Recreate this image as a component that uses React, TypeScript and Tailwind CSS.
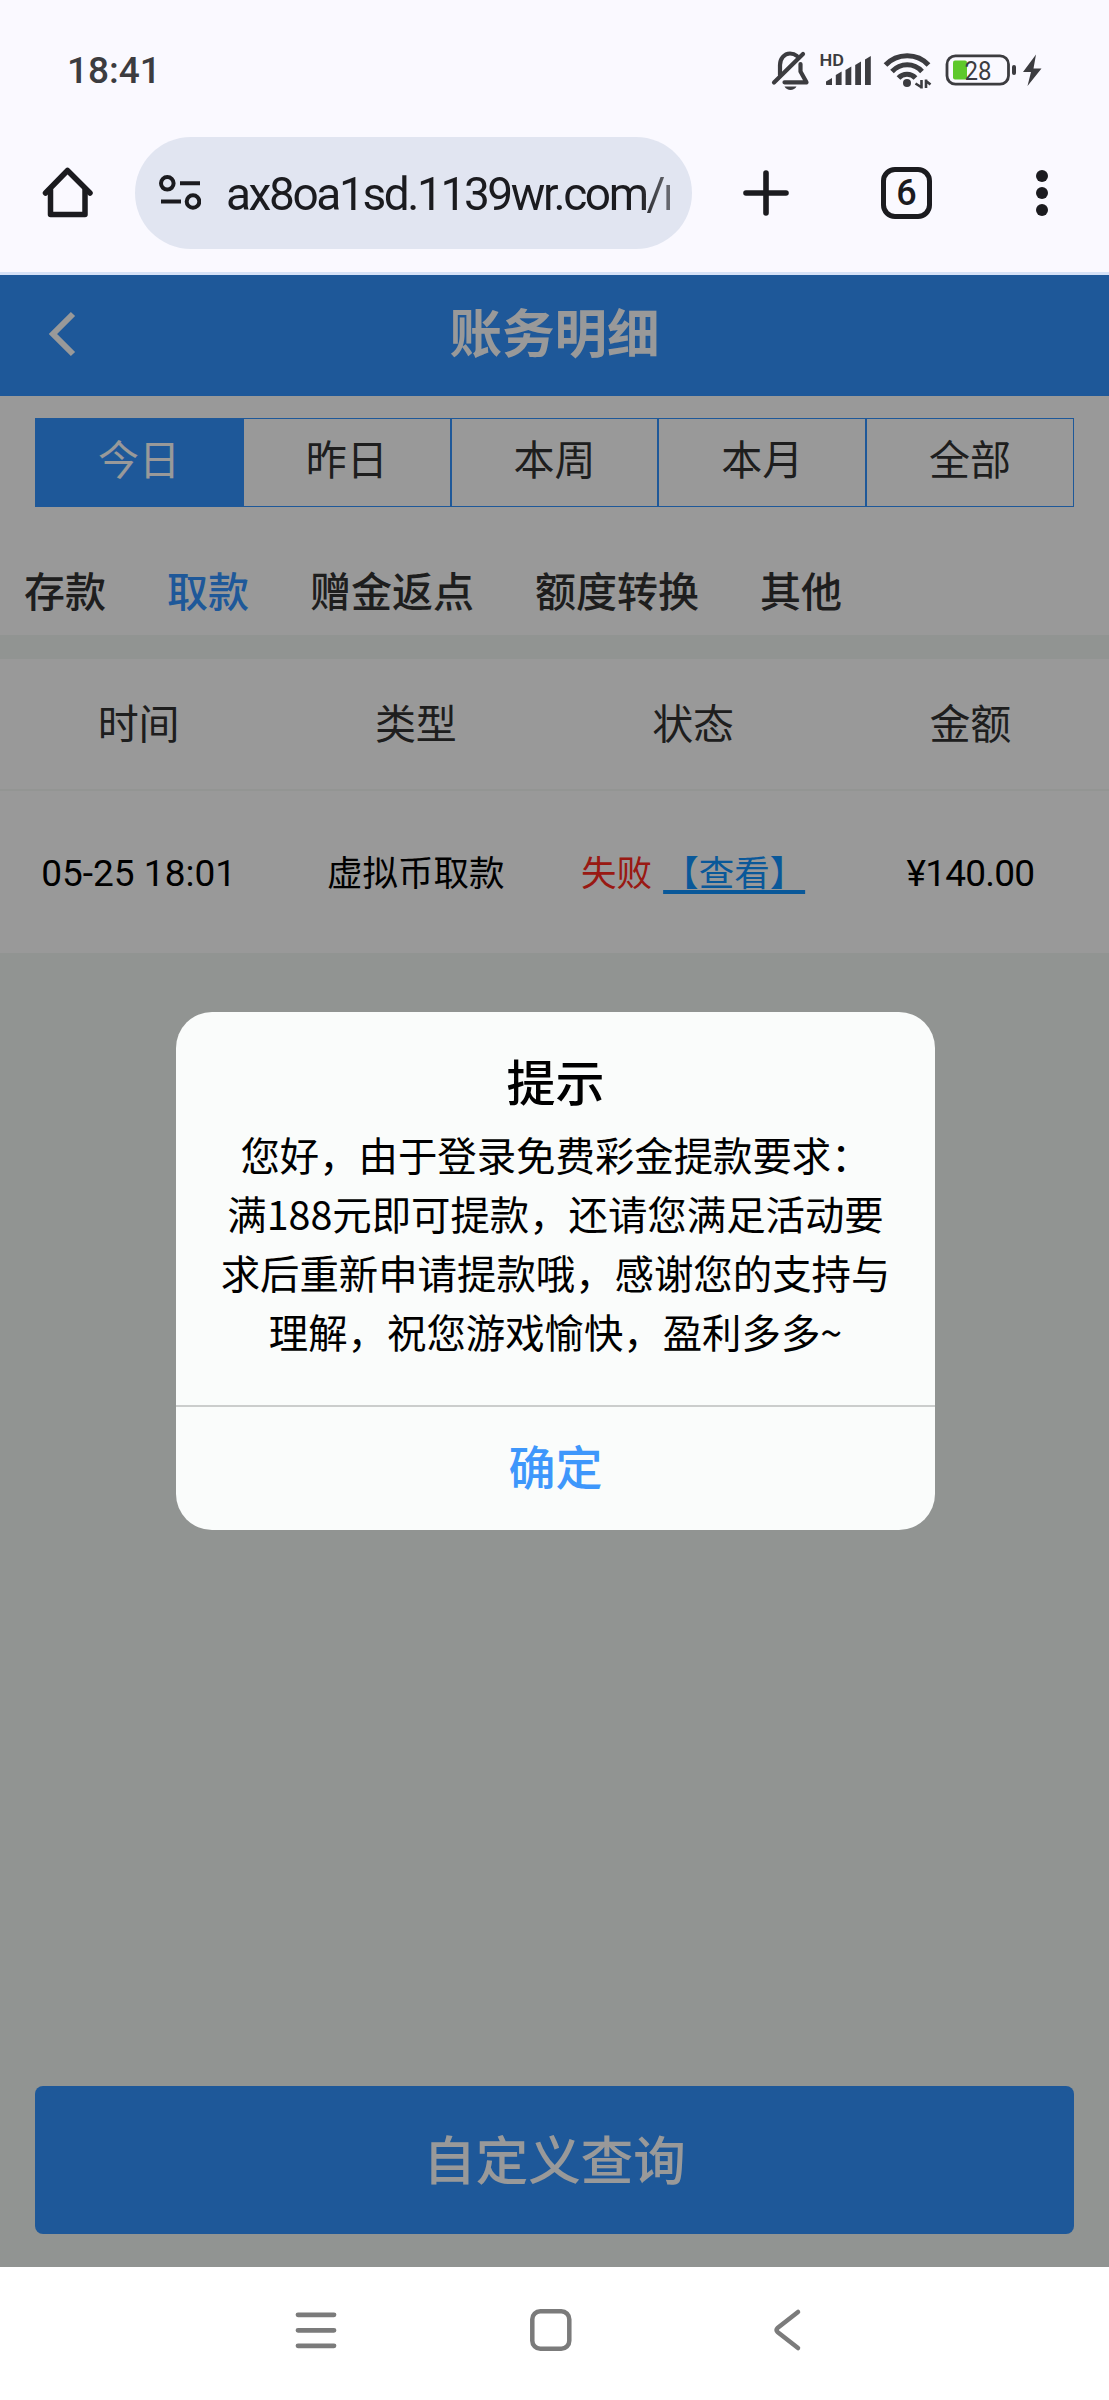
import { clsx } from 'clsx';

interface RecordRow {
  time: string;
  type: string;
  status: string;
  amount: string;
}

const ranges = ['今日', '昨日', '本周', '本月', '全部'];
const categories = ['存款', '取款', '赠金返点', '额度转换', '其他'];
const columns = ['时间', '类型', '状态', '金额'];
const records: RecordRow[] = [
  { time: '05-25 18:01', type: '虚拟币取款', status: '失败', amount: '¥140.00' },
];
const message = [
  '您好，由于登录免费彩金提款要求：',
  '满188元即可提款，还请您满足活动要',
  '求后重新申请提款哦，感谢您的支持与',
  '理解，祝您游戏愉快，盈利多多~',
];

const StatusBar = () => (
  <div className="flex h-[137px] items-start justify-between pl-[67px] pr-[66px] text-[#3c3c40]">
    <span className="mt-[49px] text-[37px] leading-[44px] font-medium">18:41</span>
    <svg className="mt-[46px] h-12 w-[272px]" viewBox="771 46 272 48" fill="none">
      {/* muted bell */}
      <g stroke="currentColor" strokeWidth="4.2" strokeLinecap="round" strokeLinejoin="round">
        <path d="M780 75V65c0-6 4-11.500 10-11.500 3 0 5 .8 7 2.500" />
        <path d="M800.500 64v7.500l6 10.800h-22" />
        <path d="M774 82.500 803 54" />
      </g>
      <path d="M784.500 86.500h12c-1.200 2.300-3.500 3.500-6 3.500s-4.800-1.200-6-3.500Z" fill="currentColor" />
      {/* signal */}
      <text x="819.500" y="66" fontSize="16" fontWeight="600" fill="currentColor" textLength="24.500" lengthAdjust="spacingAndGlyphs">HD</text>
      <g fill="currentColor">
        <path d="M826 84.500v-3l6-3.500v7h-5.500Z" />
        <path d="M835.800 85V75l5.800-3.500V85Z" />
        <path d="M845.500 85V70l5.800-3.500V85Z" />
        <path d="M855.200 85V65l5.800-3.500V85Z" />
        <path d="M865 85V59.500l5.800-3.500V85Z" />
      </g>
      {/* wifi */}
      <g stroke="currentColor" strokeWidth="5">
        <path d="M885.500 65c11.500-12.500 32-12.500 43 0" />
        <path d="M892 71.500c8.500-9 22-9 30 0" />
        <path d="M898.500 78c4.500-5 12.500-5 17 0" />
      </g>
      <circle cx="907" cy="83" r="4" fill="currentColor" />
      <g stroke="currentColor" strokeWidth="2.600">
        <path d="M921.500 80v8.500M915.500 83.500l5.500 3.500M926 88v-8.500M926 81l4.500 3.500" />
      </g>
      {/* battery */}
      <rect x="953" y="60.500" width="14" height="19" rx="2" fill="#5ec82b" />
      <rect x="947" y="55.800" width="61.500" height="28.400" rx="8.500" stroke="currentColor" strokeWidth="2.800" />
      <rect x="1012" y="65" width="4" height="10" rx="2" fill="currentColor" />
      <text x="964.500" y="79.500" fontSize="25" fill="currentColor" textLength="27" lengthAdjust="spacingAndGlyphs">28</text>
      <path d="M1036 54.500 1023 72h8l-3.500 14 14-17.500h-8Z" fill="currentColor" />
    </svg>
  </div>
);

const BrowserBar = () => (
  <div className="flex h-28 items-center text-[#1b1b1f]">
    <svg className="ml-[41px] h-[54px] w-[54px] shrink-0" viewBox="0 0 54 54" fill="none" stroke="currentColor" strokeWidth="5.500" strokeLinecap="round" strokeLinejoin="round">
      <path d="M4.500 27 26.500 4.500 49 27" />
      <path d="M9.500 24v24.500h34.500V24" />
    </svg>
    <div className="ml-10 flex h-28 w-[557px] shrink-0 items-center rounded-full bg-[#e1e5f1] pl-6">
      <svg className="h-9 w-[42px] shrink-0" viewBox="0 0 42 36" fill="none" stroke="currentColor" strokeWidth="4">
        <circle cx="8.300" cy="8.300" r="6.300" />
        <circle cx="34" cy="26.500" r="6.300" />
        <path d="M21 8.300h20M2 26.500h20" />
      </svg>
      <div className="ml-[25px] h-16 w-[444px] overflow-hidden text-[46px] leading-[66px] whitespace-nowrap [mask-image:linear-gradient(to_right,black_93%,rgba(0,0,0,.6)_100%)]">
        <span className="tracking-[-2.400px]">ax8oa1sd.1139wr.com/m</span>
      </div>
    </div>
    <svg className="ml-[50px] h-12 w-12 shrink-0" viewBox="0 0 48 48" fill="none" stroke="currentColor" strokeWidth="5.600" strokeLinecap="round">
      <path d="M24 4v40M4 24h40" />
    </svg>
    <div className="ml-[91px] flex h-[52px] w-[51px] shrink-0 items-center justify-center rounded-[14px] border-[5.500px] border-current text-[36px] leading-none font-medium">
      6
    </div>
    <div className="ml-[104px] flex flex-col gap-[5.500px]">
      <i className="size-[11.500px] rounded-full bg-current" />
      <i className="size-[11.500px] rounded-full bg-current" />
      <i className="size-[11.500px] rounded-full bg-current" />
    </div>
  </div>
);

const RangeTabs = () => (
  <div className="mx-[35px] mt-[22px] flex h-[89px] border border-[#3293ff]">
    {ranges.map((label, i) => (
      <button
        key={label}
        className={clsx(
          'flex-1 pb-[2px] text-[41px] leading-none',
          i > 0 && 'border-l-2 border-[#3293ff]',
          i === 0 ? 'bg-[#3293ff] text-white' : 'text-[#333]',
        )}
      >
        {label}
      </button>
    ))}
  </div>
);

const CategoryTabs = () => (
  <div className="flex h-32 gap-[61px] pl-6 text-[41px] leading-[173px] font-medium text-[#333]">
    {categories.map((label) => (
      <span key={label} className={label === '取款' ? 'text-[#3293ff]' : undefined}>
        {label}
      </span>
    ))}
  </div>
);

const RecordTable = () => (
  <div className="mt-6 bg-white text-center">
    <div className="grid h-[132px] grid-cols-4 border-b-2 border-[#f5f8f6] text-[41px] leading-[133px] text-[#333]">
      {columns.map((name) => (
        <span key={name}>{name}</span>
      ))}
    </div>
    {records.map((row) => (
      <div key={row.time} className="grid h-[162px] grid-cols-4 text-[35.500px] leading-[166px] whitespace-nowrap text-black">
        <span className="text-[37px]">{row.time}</span>
        <span>{row.type}</span>
        <span>
          <span className="mr-[11px] text-[#ff2a20]">{row.status}</span>
          <a className="text-[#0f93ff] underline decoration-[4px] underline-offset-[4px] [text-decoration-skip-ink:none]">【查看】</a>
        </span>
        <span className="text-[37px] tracking-[-0.8px]">{row.amount}</span>
      </div>
    ))}
  </div>
);

const TipDialog = () => (
  <div className="absolute top-[737px] left-[176px] flex h-[518px] w-[759px] flex-col rounded-[36px] bg-[#fafcfb] text-center text-black">
    <h2 className="mt-[37px] text-[49px] leading-[72px] font-medium">提示</h2>
    <div className="mt-[3px] flex-1 font-['Noto_Sans_CJK_SC',sans-serif] text-[39.400px] leading-[59px] whitespace-nowrap">
      {message.map((line) => (
        <p key={line}>{line}</p>
      ))}
    </div>
    <button className="h-[125px] border-t-2 border-[#cbcdcc] text-[47px] leading-[120px] font-medium text-[#3e97fb]">确定</button>
  </div>
);

const NavBar = () => (
  <div className="flex h-[133px] items-start bg-white pt-[41px] text-[#7b7b7b]">
    <svg className="ml-[295px] h-11 w-[42px]" viewBox="0 0 42 44" stroke="currentColor" strokeWidth="4.800" strokeLinecap="round">
      <path d="M3 6.800h36M3 22.300h36M3 37.800h36" />
    </svg>
    <svg className="ml-[192px] h-11 w-11" viewBox="0 0 44 44" fill="none" stroke="currentColor" strokeWidth="4.500">
      <rect x="3.300" y="3.300" width="37" height="37.500" rx="8" />
    </svg>
    <svg className="ml-[199px] h-11 w-[30px]" viewBox="0 0 30 44" fill="none" stroke="currentColor" strokeWidth="4.500" strokeLinecap="round" strokeLinejoin="round">
      <path d="M26 4 5.500 20q-2 2 0 4L26 40" />
    </svg>
  </div>
);

const App: React.FC = () => {
  return (
    <div className="flex h-[2400px] w-[1109px] flex-col overflow-hidden bg-[#faf9ff] font-['Roboto','Noto_Sans_CJK_SC',sans-serif]">
      <StatusBar />
      <BrowserBar />
      <div className="mt-[23px] h-[3px] bg-[#d6e2f7]" />

      <main className="relative flex flex-1 flex-col bg-[#f2f7f4]">
        <div className="bg-white">
          <header className="grid h-[121px] grid-cols-[1fr_auto_1fr] items-center bg-[#3293ff] text-white">
            <svg className="mb-[3px] ml-12 h-12 w-[30px]" viewBox="0 0 30 48" fill="none" stroke="currentColor" strokeWidth="6">
              <path d="M25 4 5 24l20 20" />
            </svg>
            <h1 className="text-[52.500px] leading-none font-bold">账务明细</h1>
          </header>
          <RangeTabs />
          <CategoryTabs />
        </div>
        <RecordTable />
        <button className="mx-[35px] mt-auto mb-[33px] h-[148px] rounded-lg bg-[#3293ff] pt-1 text-[52.500px] leading-none font-medium text-white">
          自定义查询
        </button>
        <div className="absolute inset-0 bg-black/40" />
        <TipDialog />
      </main>
      <NavBar />
    </div>
  );
};

export default App;
